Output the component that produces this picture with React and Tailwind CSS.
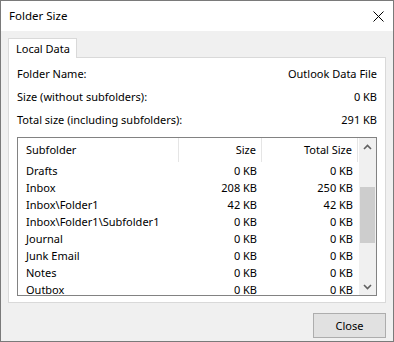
import React from 'react';

const rows = [
  ['Drafts', '0 KB', '0 KB'],
  ['Inbox', '208 KB', '250 KB'],
  ['Inbox\\Folder1', '42 KB', '42 KB'],
  ['Inbox\\Folder1\\Subfolder1', '0 KB', '0 KB'],
  ['Journal', '0 KB', '0 KB'],
  ['Junk Email', '0 KB', '0 KB'],
  ['Notes', '0 KB', '0 KB'],
  ['Outbox', '0 KB', '0 KB'],
];

function Chevron({ up }) {
  return (
    <svg width="9" height="6" viewBox="0 0 9 6" className="text-[#606060]">
      <polyline
        points={up ? '1,5 4.5,1.5 8,5' : '1,1 4.5,4.5 8,1'}
        fill="none"
        stroke="currentColor"
        strokeWidth="1.6"
      />
    </svg>
  );
}

export default function App() {
  return (
    <div
      className="w-[394px] h-[342px] border border-[#7a7a7a] bg-[#f0f0f0] flex flex-col text-[11px] text-black overflow-hidden"
      style={{ fontFamily: '"Noto Sans", "Open Sans", sans-serif' }}
    >
      {/* title bar */}
      <div className="h-[30px] bg-white flex items-center justify-between pl-[8px] pr-[9px] shrink-0">
        <span className="text-[11.5px]">Folder Size</span>
        <svg width="11" height="11" viewBox="0 0 11 11">
          <path d="M0.5 0.5 L10.5 10.5 M10.5 0.5 L0.5 10.5" stroke="#000" strokeWidth="1" fill="none" />
        </svg>
      </div>

      <div className="pl-[7px] pr-[7px] pt-[7px] flex flex-col">
        {/* tab */}
        <div className="flex">
          <div className="relative z-10 -mb-px h-[20px] w-[69px] bg-white border border-b-0 border-[#d9d9d9] flex items-center pl-[7px] leading-none">
            Local Data
          </div>
        </div>

        {/* panel */}
        <div className="h-[246px] w-[378px] bg-white border border-[#d9d9d9] pl-[8px] pr-[8px] pt-[5px] flex flex-col">
          <div className="h-[23px] flex items-center justify-between">
            <span>Folder Name:</span>
            <span>Outlook Data File</span>
          </div>
          <div className="h-[23px] flex items-center justify-between">
            <span>Size (without subfolders):</span>
            <span>0 KB</span>
          </div>
          <div className="h-[23px] flex items-center justify-between">
            <span>Total size (including subfolders):</span>
            <span>291 KB</span>
          </div>

          {/* list view */}
          <div className="mt-[5px] h-[159px] w-[360px] border border-[#828282] flex overflow-hidden">
            <div className="flex-1 flex flex-col overflow-hidden">
              <div className="h-[24px] shrink-0 grid grid-cols-[161px_83px_96px] items-stretch">
                <div className="flex items-center pl-[8px] border-r border-[#e5e5e5]">Subfolder</div>
                <div className="flex items-center justify-end pr-[5px] border-r border-[#e5e5e5]">Size</div>
                <div className="flex items-center justify-end pr-[5px] border-r border-[#e5e5e5]">Total Size</div>
              </div>
              {rows.map(([name, size, total]) => (
                <div key={name} className="h-[17px] shrink-0 grid grid-cols-[161px_83px_96px] items-center leading-[12px]">
                  <div className="pl-[8px] whitespace-nowrap">{name}</div>
                  <div className="text-right pr-[5px]">{size}</div>
                  <div className="text-right pr-[5px]">{total}</div>
                </div>
              ))}
            </div>

            {/* scrollbar */}
            <div className="w-[17px] shrink-0 bg-[#f0f0f0] flex flex-col">
              <div className="h-[17px] flex items-center justify-center">
                <Chevron up />
              </div>
              <div className="flex-1 flex flex-col px-[1px]">
                <div className="h-[32px]" />
                <div className="h-[56px] bg-[#cdcdcd]" />
              </div>
              <div className="h-[17px] flex items-center justify-center">
                <Chevron />
              </div>
            </div>
          </div>
        </div>

        {/* footer */}
        <div className="flex justify-end pt-[10px]">
          <button className="w-[73px] h-[25px] bg-[#e1e1e1] border border-[#adadad] flex items-center justify-center leading-none">
            Close
          </button>
        </div>
      </div>
    </div>
  );
}
